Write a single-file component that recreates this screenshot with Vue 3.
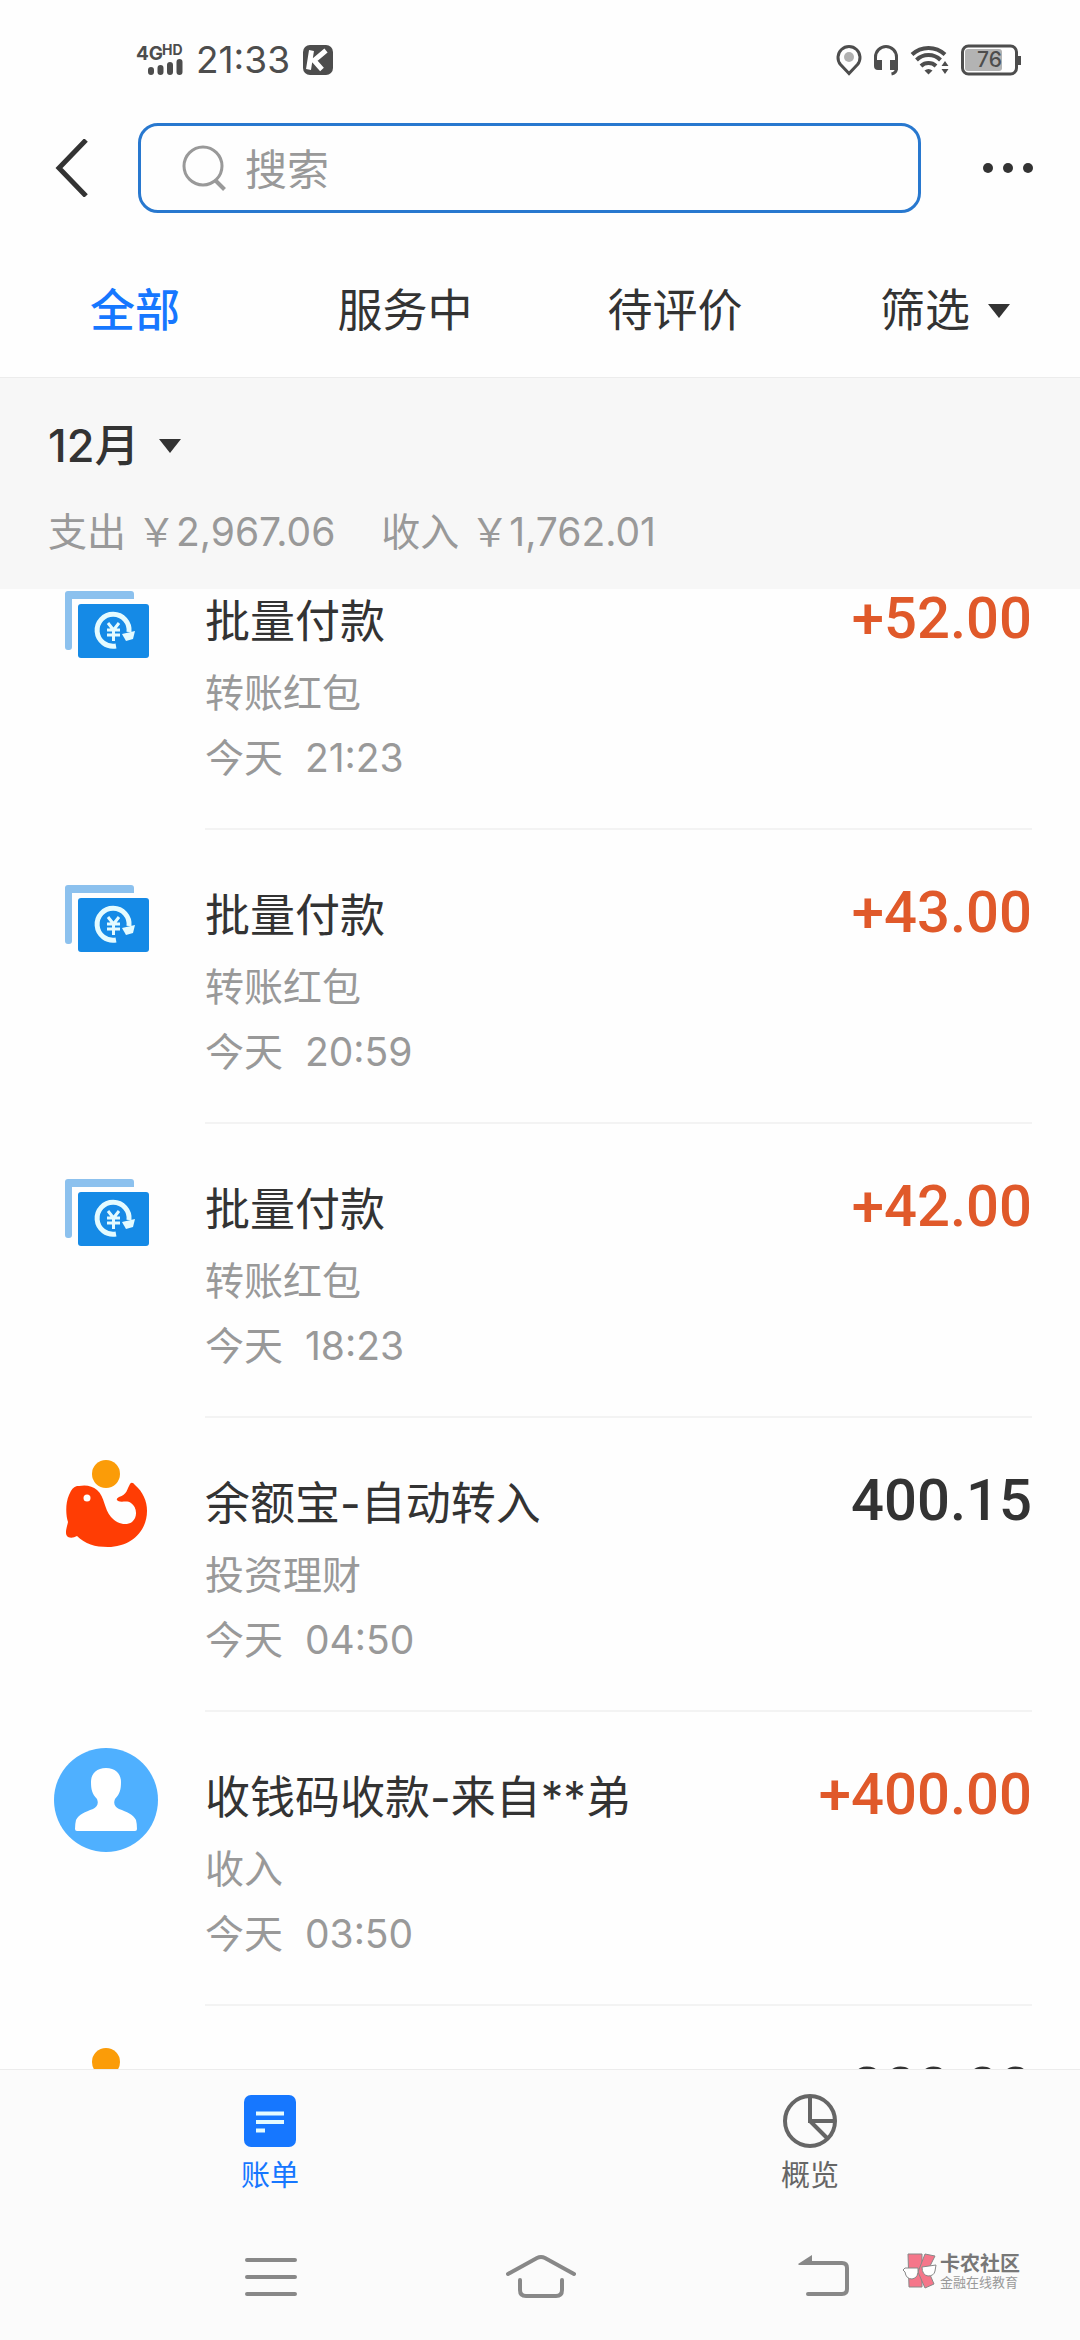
<script setup>
import { ref } from 'vue'

const keyword = ref('')
const activeTab = ref('全部')
const tabs = ['全部', '服务中', '待评价']

const bills = [
  { icon: 'pay', title: '批量付款', kind: '转账红包', time: '今天  21:23', amount: '+52.00' },
  { icon: 'pay', title: '批量付款', kind: '转账红包', time: '今天  20:59', amount: '+43.00' },
  { icon: 'pay', title: '批量付款', kind: '转账红包', time: '今天  18:23', amount: '+42.00' },
  { icon: 'whale', title: '余额宝-自动转入', kind: '投资理财', time: '今天  04:50', amount: '400.15' },
  { icon: 'user', title: '收钱码收款-来自**弟', kind: '收入', time: '今天  03:50', amount: '+400.00' },
  { icon: 'whale', title: '', kind: '', time: '', amount: '300.00' }
]
</script>

<template>
  <div class="app">
    <div class="status">
      <div class="status-side">
        <svg class="signal" width="48" height="34" viewBox="0 0 48 34">
          <text x="0" y="17" font-size="19" font-weight="700">4G</text>
          <text x="26" y="12" font-size="14" font-weight="700">HD</text>
          <g stroke="#4d4d4d" stroke-width="6" stroke-linecap="round">
            <path d="M15 27v2M24.500 25v4M34 22v7M43.500 19v10" />
          </g>
        </svg>
        <span class="clock">21:33</span>
        <svg width="32" height="32" viewBox="0 0 32 32">
          <rect x="1" y="1" width="30" height="30" rx="7" fill="#4d4d4d" />
          <path d="M9.500 6.500 6.500 25.500M24 6.500 12 16.500 20 25.500" stroke="#fff" stroke-width="5" fill="none" />
        </svg>
      </div>
      <div class="status-side right">
        <svg width="26" height="32" viewBox="0 0 26 32">
          <path d="M13 29.500 4.500 20.500A11 11 0 1 1 21.500 20.500Z" fill="none" stroke="#4d4d4d" stroke-width="3" />
          <circle cx="13" cy="13" r="5" fill="#b0b0b0" />
        </svg>
        <svg width="26" height="32" viewBox="0 0 26 32">
          <path d="M2.500 18v-5a10.500 10.500 0 0 1 21 0v5" fill="none" stroke="#4d4d4d" stroke-width="3" />
          <path d="M1 16h8v10H5q-4 0-4-4zM17 16h8v10h-8z" fill="#4d4d4d" />
          <path d="M23.500 24q0 5-5 6" fill="none" stroke="#4d4d4d" stroke-width="3" />
        </svg>
        <svg width="40" height="32" viewBox="0 0 40 32">
          <g fill="none" stroke="#4d4d4d" stroke-width="4">
            <path d="M2 10.500a24 24 0 0 1 33 0" />
            <path d="M6.500 16a17 17 0 0 1 24 0" />
            <path d="M11 22a11 11 0 0 1 15 0" />
          </g>
          <path d="M14.500 26.500q4-3 8 0L18.500 30.500zM31.500 22l3.500-5 3.500 5zM31.500 25l3.500 5 3.500-5z" fill="#4d4d4d" />
        </svg>
        <svg class="battery" width="60" height="32" viewBox="0 0 60 32">
          <rect x="1.500" y="2" width="54" height="28" rx="6" fill="#fff" stroke="#4d4d4d" stroke-width="3" />
          <rect x="4" y="5" width="37" height="22" rx="3" fill="#b3b3b3" />
          <rect x="57" y="12" width="3" height="9" fill="#4d4d4d" />
          <text x="16" y="23" font-size="21" font-weight="500">76</text>
        </svg>
      </div>
    </div>

    <header class="search-row">
      <button class="back" aria-label="返回">
        <svg width="34" height="58" viewBox="0 0 34 58">
          <path d="M31 1 4 29 31 57" fill="none" stroke="#333" stroke-width="5" />
        </svg>
      </button>
      <label class="search">
        <svg width="46" height="46" viewBox="0 0 46 46">
          <circle cx="22" cy="21" r="19" fill="none" stroke="#999" stroke-width="3" />
          <path d="M34.500 35.500 43.500 44.500" stroke="#999" stroke-width="4" />
        </svg>
        <input v-model="keyword" type="text" placeholder="搜索" aria-label="搜索" />
      </label>
      <button class="more" aria-label="更多">
        <svg width="52" height="12" viewBox="0 0 52 12">
          <circle cx="6" cy="6" r="5" fill="#333" />
          <circle cx="26" cy="6" r="5" fill="#333" />
          <circle cx="46" cy="6" r="5" fill="#333" />
        </svg>
      </button>
    </header>

    <nav class="tabs">
      <button v-for="t in tabs" :key="t" :class="{ on: t === activeTab }" @click="activeTab = t">{{ t }}</button>
      <button>
        筛选
        <svg width="22" height="14" viewBox="0 0 22 14"><path d="M0 0h22L11 14z" fill="#333" /></svg>
      </button>
    </nav>

    <section class="month">
      <button class="month-pick">
        12月
        <svg width="22" height="14" viewBox="0 0 22 14"><path d="M0 0h22L11 14z" fill="#333" /></svg>
      </button>
      <p class="totals">
        <span>支出 ￥2,967.06</span>
        <span>收入 ￥1,762.01</span>
      </p>
    </section>

    <main class="scroller">
      <ul class="bills">
        <li v-for="(b, i) in bills" :key="i" class="bill">
          <svg v-if="b.icon === 'pay'" class="icon" width="104" height="104" viewBox="0 0 104 104">
            <path d="M14 19H77q3 0 3 3v5H18V75q0 3-3 3h-1q-3 0-3-3V22q0-3 3-3z" fill="#8cc1ee" />
            <rect x="24" y="32" width="71" height="54" rx="3" fill="#158ae6" />
            <path d="M62 74A16 16 0 1 1 75 60" fill="none" stroke="#e4fbff" stroke-width="5" />
            <path d="M68 62l13-3-2 8-7 2z" fill="#e4fbff" />
            <path d="M54 51l5.500 7 5.500-7M59.500 58v11M53 58h13M53 63h13" fill="none" stroke="#e4fbff" stroke-width="3" />
          </svg>
          <svg v-else-if="b.icon === 'whale'" class="icon" width="104" height="104" viewBox="0 0 104 104">
            <circle cx="52" cy="20" r="14" fill="#fb9c08" />
            <path
              d="M25 32Q36 30 43 36C51 43 50 55 57 63C63 70 72 72 78 68C84 63 83 53 77 49C73 46 68 49 64 47Q61 45 65 43C73 41 73 35 76 30Q78 27 81 31C89 38 93 47 93 57C93 78 76 93 54 93C41 93 31 90 23 82Q18 85 14 83C10 80 13 73 14 68C12 62 11 50 15 41Q18 33 23 32Z"
              fill="#ff3d04"
            />
            <circle cx="33" cy="44" r="3.500" fill="#fff" />
          </svg>
          <svg v-else class="icon" width="104" height="104" viewBox="0 0 104 104">
            <circle cx="52" cy="52" r="52" fill="#4fb0ff" />
            <path
              d="M52 20C62 20 67 26 67 34C67 41 66 46 61 51C59 56 61 59 65 61C73 64 79 66 82 72Q83 76 83 81Q83 83 81 83H23Q21 83 21 81Q21 76 22 72C25 66 31 64 39 61C43 59 45 56 43 51C38 46 37 41 37 34C37 26 42 20 52 20Z"
              fill="#fff"
            />
          </svg>
          <div class="body">
            <div class="info">
              <h2 class="title">{{ b.title }}</h2>
              <p class="meta">{{ b.kind }}</p>
              <p class="meta">{{ b.time }}</p>
            </div>
            <span class="amount" :class="{ income: b.amount.startsWith('+') }">{{ b.amount }}</span>
          </div>
        </li>
      </ul>
    </main>

    <footer class="bottom">
      <nav class="dock">
        <button class="on">
          <svg width="56" height="56" viewBox="0 0 56 56">
            <rect x="2" y="2" width="52" height="52" rx="7" fill="#1677ff" />
            <path d="M14 20.500h28M14 29h28M14 37.500h9" stroke="#e4fbff" stroke-width="4" />
          </svg>
          账单
        </button>
        <button>
          <svg width="56" height="56" viewBox="0 0 56 56">
            <g fill="none" stroke="#666" stroke-width="4">
              <circle cx="28" cy="28" r="25" />
              <path d="M28 3V28H53M28 28 45 45" />
            </g>
          </svg>
          概览
        </button>
      </nav>
      <nav class="system">
        <button aria-label="菜单">
          <svg width="72" height="48" viewBox="0 0 72 48">
            <path d="M13 7h48M13 24h48M13 41h48" stroke="#888" stroke-width="4" stroke-linecap="round" />
          </svg>
        </button>
        <button aria-label="主页">
          <svg width="72" height="48" viewBox="0 0 72 48">
            <g fill="none" stroke="#888" stroke-width="4" stroke-linecap="round">
              <path d="M4 21 33 5q4-2 8 0L70 21" />
              <path d="M16 27V37q0 6 6 6H52q6 0 6-6V27" />
            </g>
          </svg>
        </button>
        <button aria-label="后退">
          <svg width="96" height="48" viewBox="0 0 96 48">
            <path d="M45 10H80q5 0 5 5V36q0 5-5 5H46" fill="none" stroke="#888" stroke-width="4" stroke-linecap="round" />
            <path d="M36 11 50 2v10H37z" fill="#888" />
          </svg>
        </button>
      </nav>
      <div class="brand">
        <svg width="36" height="36" viewBox="0 0 36 36">
          <g fill="#f5768a" stroke="#888" stroke-width="1">
            <path d="M6 1H20V34H7z" />
            <path d="M23 1 33 3 26 17 32 31 23 35 16 19z" />
          </g>
          <g fill="#fff" stroke="#888" stroke-width="1">
            <path d="M1 17 3 15 16 15Q17 25 10 26Q4 26 3 19z" />
            <path d="M20 14 34 12 33 18Q32 23 26 23Q20 22 20 14z" />
          </g>
        </svg>
        <div class="brand-text">
          <strong>卡农社区</strong>
          <small>金融在线教育</small>
        </div>
      </div>
    </footer>
  </div>
</template>

<style>
body {
  margin: 0;
  background: #fefefe;
}
</style>

<style scoped>
.app {
  display: flex;
  flex-direction: column;
  height: 100vh;
  background: #fefefe;
  color: #333;
  font-family: Inter, "Noto Sans CJK SC", sans-serif;
}
svg {
  display: block;
  flex: none;
}
button {
  display: flex;
  align-items: center;
  justify-content: center;
  padding: 0;
  border: 0;
  background: none;
  color: inherit;
  font: inherit;
}
h2,
p,
ul {
  margin: 0;
  padding: 0;
  font-weight: 400;
}

.status {
  display: flex;
  flex: none;
  align-items: center;
  justify-content: space-between;
  height: 120px;
  padding: 0 59px 0 136px;
  color: #4d4d4d;
}
.status text {
  fill: #4d4d4d;
}
.status-side {
  display: flex;
  align-items: center;
  gap: 12px;
}
.status-side.right {
  gap: 11px;
}
.clock {
  font-size: 37px;
  line-height: 40px;
}

.search-row {
  display: flex;
  flex: none;
  align-items: center;
  height: 96px;
}
.back {
  flex: none;
  width: 138px;
  padding-left: 6px;
}
.search {
  display: flex;
  flex: 1;
  align-items: center;
  gap: 18px;
  box-sizing: border-box;
  min-width: 0;
  height: 90px;
  padding: 0 40px;
  border: 3px solid #2878cf;
  border-radius: 20px;
}
.search input {
  flex: 1;
  min-width: 0;
  padding: 2px 0 0;
  border: 0;
  outline: 0;
  background: none;
  color: #333;
  font: inherit;
  font-size: 42px;
}
.search input::placeholder {
  color: #999;
  opacity: 1;
}
.more {
  flex: none;
  width: 159px;
  padding-left: 14px;
}

.tabs {
  display: grid;
  flex: none;
  grid-template-columns: repeat(4, 1fr);
  padding: 63px 0 34px;
  border-bottom: 1px solid #ececec;
  font-size: 45px;
  line-height: 64px;
}
.tabs button {
  gap: 18px;
}
.tabs .on {
  color: #1677ff;
  font-weight: 500;
}

.month {
  flex: none;
  padding: 36px 48px 25px;
  background: #f7f7f7;
}
.month-pick {
  gap: 20px;
  font-size: 45px;
  font-weight: 500;
  line-height: 64px;
}
.totals {
  display: flex;
  gap: 46px;
  margin-top: 22px;
  color: #999;
  font-size: 39px;
  line-height: 64px;
}

.scroller {
  flex: 1;
  min-height: 0;
  overflow: hidden;
}
.bills {
  margin-top: -53px;
  list-style: none;
}
.bill {
  display: flex;
  gap: 47px;
  padding: 0 48px 0 54px;
}
.icon {
  margin-top: 36px;
}
.body {
  display: flex;
  flex: 1;
  justify-content: space-between;
  box-sizing: border-box;
  min-height: 294px;
  border-bottom: 2px solid #f3f3f3;
}
.info {
  padding-top: 54px;
}
.title {
  margin-bottom: 6px;
  font-size: 45px;
  line-height: 64px;
}
.meta {
  color: #999;
  font-size: 39px;
  line-height: 65px;
  white-space: pre;
}
.amount {
  padding-top: 58px;
  font-family: Roboto, sans-serif;
  font-size: 58px;
  font-weight: 500;
  line-height: 48px;
}
.amount.income {
  color: #e0592a;
}

.bottom {
  position: relative;
  flex: none;
  border-top: 1px solid #ececec;
  background: #fbfbfb;
}
.dock {
  display: grid;
  grid-template-columns: 1fr 1fr;
  padding-top: 23px;
  color: #666;
  font-size: 29px;
  line-height: 40px;
}
.dock button {
  flex-direction: column;
  gap: 7px;
}
.dock .on {
  color: #1677ff;
}
.system {
  display: grid;
  grid-template-columns: repeat(3, 1fr);
  padding: 57px 12.5% 39px;
}
.brand {
  position: absolute;
  right: 60px;
  bottom: 51px;
  display: flex;
  align-items: center;
  gap: 2px;
  color: #777;
}
.brand-text {
  display: flex;
  flex-direction: column;
}
.brand strong {
  font-size: 20px;
  line-height: 22px;
}
.brand small {
  color: #999;
  font-size: 13px;
  line-height: 14px;
}
</style>
